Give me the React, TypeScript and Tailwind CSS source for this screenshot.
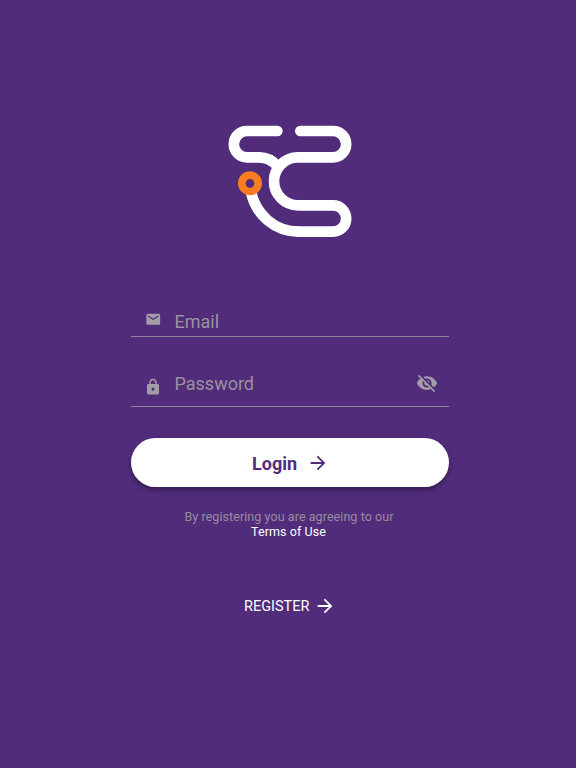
import React from "react";
import { MdArrowForward, MdEmail, MdLock, MdVisibilityOff } from "react-icons/md";

function Logo() {
  return (
    <svg width="140" height="130" viewBox="0 0 420 390" fill="none">
      <g stroke="#fff" strokeWidth="32">
        <path
          strokeLinecap="round"
          d="M172 48H81a39.5 39.5 0 0 0 0 79h37"
        />
        <path d="M117 127c25 0 42 10 55 27" />
        <path
          strokeLinecap="round"
          d="M241 48h98a39.5 39.5 0 0 1 0 79H234a72 72 0 0 0 0 144h105a39.5 39.5 0 0 1 0 79H236"
        />
        <path d="M237 350C166 350 105 300 92 225" />
      </g>
      <circle cx="90" cy="205" r="24.5" stroke="#f97d20" strokeWidth="23" />
    </svg>
  );
}

export default function App() {
  const handleSubmit = (event: React.FormEvent<HTMLFormElement>) => {
    event.preventDefault();
  };

  return (
    <main className="flex h-[768px] w-[576px] flex-col bg-[#512c7b] pt-[115px] font-['Roboto',sans-serif]">
      <div className="pl-[220px]">
        <Logo />
      </div>

      <form onSubmit={handleSubmit} className="ml-[131px] mt-[55px] flex w-[318px] flex-col">
        <div className="flex h-[37px] items-start border-b border-[#8f8298] pl-[13.5px]">
          <MdEmail size={16.5} className="mt-[10.5px] text-[#a39da5]" />
          <input
            type="text"
            aria-label="Email"
            placeholder="Email"
            className="ml-[13.5px] mt-[7px] h-[28px] w-[220px] text-[18px] text-white outline-none placeholder:text-[#9b929f]"
          />
        </div>

        <div className="flex h-[70px] items-start border-b border-[#8f8298] pl-[13px]">
          <MdLock size={18} className="mt-[41px] text-[#a39da5]" />
          <input
            type="password"
            aria-label="Password"
            placeholder="Password"
            className="ml-[12.5px] mt-[32px] h-[28px] w-[220px] text-[18px] text-white outline-none placeholder:text-[#9b929f]"
          />
          <MdVisibilityOff size={22} className="ml-[21px] mt-[35px] text-[#a39da5]" />
        </div>

        <button
          type="submit"
          className="mt-[31px] flex h-[49px] items-center rounded-full bg-white pl-[121px] text-[18px] font-bold text-[#512c7b] shadow-[0_3px_5px_rgba(0,0,0,0.35)]"
        >
          <span className="pt-[2px]">Login</span>
          <MdArrowForward size={22} className="ml-[10px]" />
        </button>
      </form>

      <p className="mt-[22px] pl-[2px] text-center text-[12.5px] leading-[15px] tracking-[0.07px] text-[#978c9e]">
        By registering you are agreeing to our
        <br />
        <a className="pr-px text-white">Terms of Use</a>
      </p>

      <a className="mt-[55px] flex items-center pl-[244px] text-[14.5px] text-white">
        <span className="pt-[2px]">REGISTER</span>
        <MdArrowForward size={22} className="ml-[5px]" />
      </a>
    </main>
  );
}
